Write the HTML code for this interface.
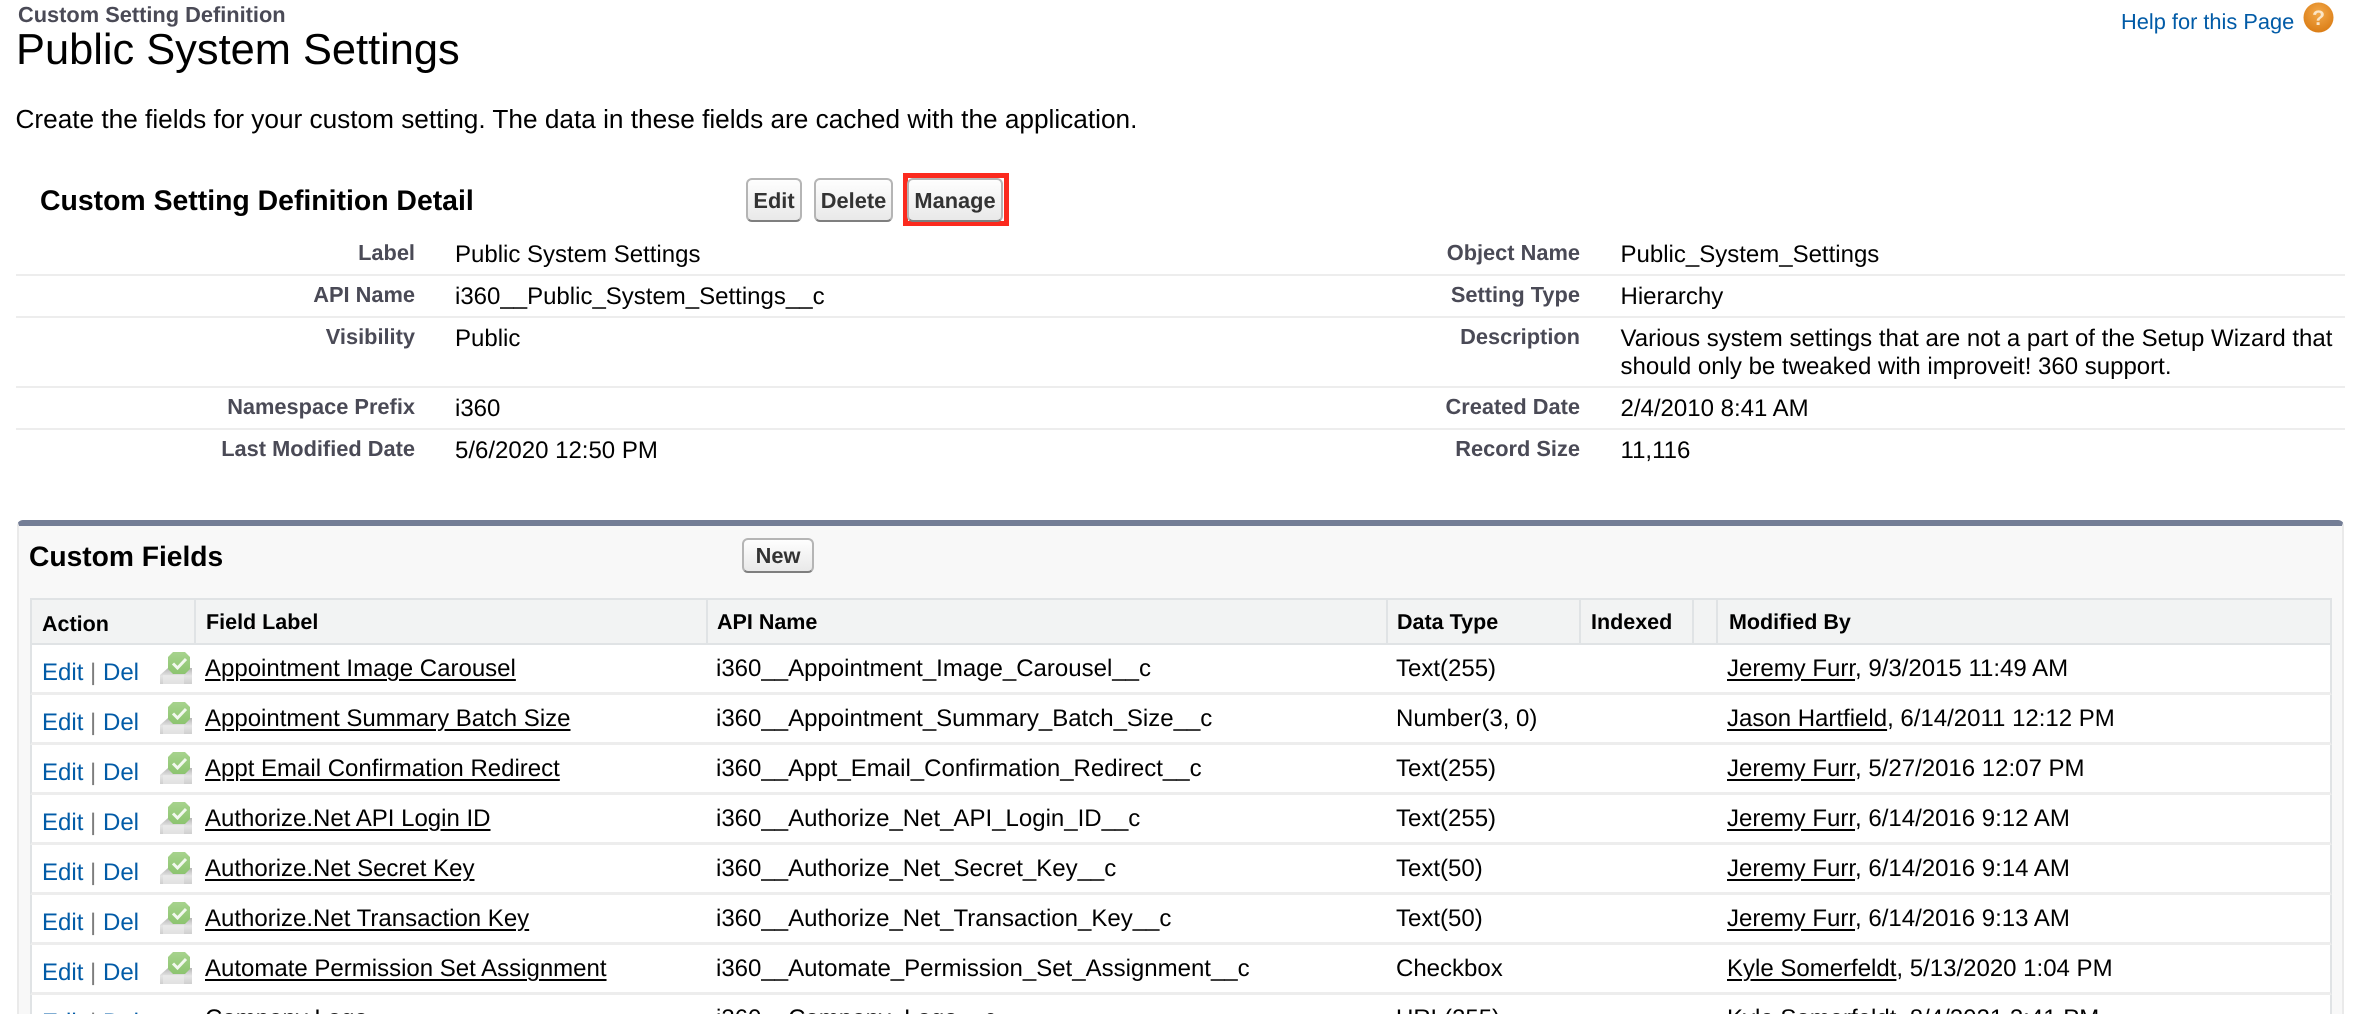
<!DOCTYPE html>
<html><head><meta charset="utf-8"><title>Public System Settings</title>
<style>
html,body{margin:0;padding:0;background:#fff;width:2362px;height:1014px;overflow:hidden}
#w{width:2362px;height:1014px;overflow:hidden;position:relative;font-family:"Liberation Sans",Arial,sans-serif;color:#000;text-rendering:geometricPrecision}
.t,.b{position:absolute;line-height:0;white-space:nowrap}
.t{font-size:24px}
.b{font-size:21.8px;font-weight:bold}
.l{color:#4a4a56;text-align:right}
a{color:inherit;text-decoration:none}
.u{text-decoration:underline;text-decoration-thickness:2px;text-underline-offset:3px}
.sep{position:absolute;left:16px;width:2329px;height:2px;background:#ededed}
.btn{position:absolute;box-sizing:border-box;border:2px solid #b5b5b5;border-bottom-color:#7f7f7f;border-radius:6px;background:linear-gradient(#fefefe,#e9e9e9);color:#333;font-weight:bold;font-size:21.8px;text-align:center}
.panel{position:absolute;left:17px;top:520px;width:2327px;height:500px;box-sizing:border-box;background:#f8f8f8;border-top:6px solid #747e96;border-left:2px solid #eaeaea;border-right:2px solid #eaeaea;border-radius:6px 6px 0 0}
.head{position:absolute;left:30px;top:598px;width:2302px;height:47px;box-sizing:border-box;background:#f2f3f3;border:2px solid #e0e3e5}
.col{position:absolute;top:600px;width:2px;height:43px;background:#e0e3e5}
.r{position:absolute;left:30px;width:2302px;height:50px;box-sizing:border-box;background:#fff;border-bottom:3px solid #ededed;border-left:2px solid #e0e3e5;border-right:2px solid #e0e3e5}
.r .t{top:24px}
.r .a{top:28px;color:#015ba7}
.r .p{color:#7d7d7d}
.r svg{position:absolute;left:128px;top:7px}
</style></head><body><div id="w">
<svg width="0" height="0" style="position:absolute"><defs>
<linearGradient id="g1" x1="0" y1="0" x2="0" y2="1"><stop offset="0" stop-color="#b5b5b5"/><stop offset=".5" stop-color="#e4e4e4"/><stop offset="1" stop-color="#cfcfcf"/></linearGradient>
<linearGradient id="g2" x1="0" y1="0" x2="0" y2="1"><stop offset="0" stop-color="#a7d38d"/><stop offset="1" stop-color="#8cc46f"/></linearGradient>
<g id="ic"><path d="M0 23L8 16H24V32H0Z" fill="url(#g1)"/><path d="M3 23H29V32H3Z" fill="#eeeeee" opacity=".55"/><path d="M24 16H32V32H24Z" fill="url(#g1)"/><path d="M13 0H25L30 5V17L25 22H13L8 17V5Z" fill="url(#g2)"/><path d="M13 11.5L17.5 16L26 7" fill="none" stroke="#f2f8ee" stroke-width="3"/></g>
</defs></svg>

<div class="b" style="left:18px;top:15px;color:#4a4a56">Custom Setting Definition</div>
<div class="t" style="left:16px;top:49.5px;font-size:43.4px">Public System Settings</div>
<div class="t" style="left:15.5px;top:119px;font-size:26.2px">Create the fields for your custom setting. The data in these fields are cached with the application.</div>
<div class="b" style="left:2121px;top:22px;font-weight:normal;color:#015ba7">Help for this Page</div>
<svg style="position:absolute;left:2303px;top:2px" width="31" height="31" viewBox="0 0 31 31"><defs><radialGradient id="o" cx=".5" cy=".35" r=".7"><stop offset="0" stop-color="#f3a94a"/><stop offset="1" stop-color="#d97a12"/></radialGradient></defs><circle cx="15.5" cy="15.5" r="15" fill="url(#o)"/><text x="15.5" y="23" font-family="Liberation Sans" font-weight="bold" font-size="21" text-anchor="middle" fill="#fbe6c8">?</text></svg>

<div class="b" style="left:40px;top:200.5px;font-size:28.4px">Custom Setting Definition Detail</div>
<div style="position:absolute;left:903px;top:173px;width:106px;height:53px;box-sizing:border-box;border:5px solid #fb2a1e"></div>
<div class="btn" style="left:746px;top:178px;width:56px;height:44px;line-height:41px">Edit</div>
<div class="btn" style="left:814px;top:178px;width:79px;height:44px;line-height:41px">Delete</div>
<div class="btn" style="left:907px;top:178px;width:96px;height:44px;line-height:41px">Manage</div>

<div class="b l" style="right:1947px;top:253px">Label</div><div class="t" style="left:455px;top:255px">Public System Settings</div>
<div class="b l" style="right:782px;top:253px">Object Name</div><div class="t" style="left:1620.5px;top:255px">Public_System_Settings</div>
<div class="sep" style="top:274px"></div>
<div class="b l" style="right:1947px;top:295px">API Name</div><div class="t" style="left:455px;top:297px">i360__Public_System_Settings__c</div>
<div class="b l" style="right:782px;top:295px">Setting Type</div><div class="t" style="left:1620.5px;top:297px">Hierarchy</div>
<div class="sep" style="top:316px"></div>
<div class="b l" style="right:1947px;top:337px">Visibility</div><div class="t" style="left:455px;top:339px">Public</div>
<div class="b l" style="right:782px;top:337px">Description</div><div class="t" style="left:1620.5px;top:339px">Various system settings that are not a part of the Setup Wizard that</div><div class="t" style="left:1620.5px;top:367px">should only be tweaked with improveit! 360 support.</div>
<div class="sep" style="top:386px"></div>
<div class="b l" style="right:1947px;top:407px">Namespace Prefix</div><div class="t" style="left:455px;top:409px">i360</div>
<div class="b l" style="right:782px;top:407px">Created Date</div><div class="t" style="left:1620.5px;top:409px">2/4/2010 8:41 AM</div>
<div class="sep" style="top:428px"></div>
<div class="b l" style="right:1947px;top:449px">Last Modified Date</div><div class="t" style="left:455px;top:451px">5/6/2020 12:50 PM</div>
<div class="b l" style="right:782px;top:449px">Record Size</div><div class="t" style="left:1620.5px;top:451px">11,116</div>

<div class="panel"></div>
<div class="b" style="left:29px;top:555.5px;font-size:28.2px">Custom Fields</div>
<div class="btn" style="left:742px;top:538px;width:72px;height:35px;line-height:32px">New</div>

<div class="head"></div>
<div class="col" style="left:194px"></div><div class="col" style="left:706px"></div><div class="col" style="left:1386px"></div><div class="col" style="left:1579px"></div><div class="col" style="left:1692px"></div><div class="col" style="left:1716px"></div>
<div class="b" style="left:42px;top:624px;font-size:21.5px">Action</div>
<div class="b" style="left:206px;top:622px;font-size:21.5px">Field Label</div>
<div class="b" style="left:717px;top:622px;font-size:21.5px">API Name</div>
<div class="b" style="left:1397px;top:622px;font-size:21.5px">Data Type</div>
<div class="b" style="left:1591px;top:622px;font-size:21.5px">Indexed</div>
<div class="b" style="left:1729px;top:622px;font-size:21.5px">Modified By</div>

<div class="r" style="top:645px"><div class="t a" style="left:10px">Edit</div><div class="t p" style="left:58px;top:28px">|</div><div class="t a" style="left:71px">Del</div><svg width="32" height="32"><use href="#ic"/></svg><div class="t u" style="left:173px">Appointment Image Carousel</div><div class="t" style="left:684px">i360__Appointment_Image_Carousel__c</div><div class="t" style="left:1364px">Text(255)</div><div class="t" style="left:1695px"><span class="u">Jeremy Furr</span>, 9/3/2015 11:49 AM</div></div>

<div class="r" style="top:695px"><div class="t a" style="left:10px">Edit</div><div class="t p" style="left:58px;top:28px">|</div><div class="t a" style="left:71px">Del</div><svg width="32" height="32"><use href="#ic"/></svg><div class="t u" style="left:173px">Appointment Summary Batch Size</div><div class="t" style="left:684px">i360__Appointment_Summary_Batch_Size__c</div><div class="t" style="left:1364px">Number(3, 0)</div><div class="t" style="left:1695px"><span class="u">Jason Hartfield</span>, 6/14/2011 12:12 PM</div></div>

<div class="r" style="top:745px"><div class="t a" style="left:10px">Edit</div><div class="t p" style="left:58px;top:28px">|</div><div class="t a" style="left:71px">Del</div><svg width="32" height="32"><use href="#ic"/></svg><div class="t u" style="left:173px">Appt Email Confirmation Redirect</div><div class="t" style="left:684px">i360__Appt_Email_Confirmation_Redirect__c</div><div class="t" style="left:1364px">Text(255)</div><div class="t" style="left:1695px"><span class="u">Jeremy Furr</span>, 5/27/2016 12:07 PM</div></div>

<div class="r" style="top:795px"><div class="t a" style="left:10px">Edit</div><div class="t p" style="left:58px;top:28px">|</div><div class="t a" style="left:71px">Del</div><svg width="32" height="32"><use href="#ic"/></svg><div class="t u" style="left:173px">Authorize.Net API Login ID</div><div class="t" style="left:684px">i360__Authorize_Net_API_Login_ID__c</div><div class="t" style="left:1364px">Text(255)</div><div class="t" style="left:1695px"><span class="u">Jeremy Furr</span>, 6/14/2016 9:12 AM</div></div>

<div class="r" style="top:845px"><div class="t a" style="left:10px">Edit</div><div class="t p" style="left:58px;top:28px">|</div><div class="t a" style="left:71px">Del</div><svg width="32" height="32"><use href="#ic"/></svg><div class="t u" style="left:173px">Authorize.Net Secret Key</div><div class="t" style="left:684px">i360__Authorize_Net_Secret_Key__c</div><div class="t" style="left:1364px">Text(50)</div><div class="t" style="left:1695px"><span class="u">Jeremy Furr</span>, 6/14/2016 9:14 AM</div></div>

<div class="r" style="top:895px"><div class="t a" style="left:10px">Edit</div><div class="t p" style="left:58px;top:28px">|</div><div class="t a" style="left:71px">Del</div><svg width="32" height="32"><use href="#ic"/></svg><div class="t u" style="left:173px">Authorize.Net Transaction Key</div><div class="t" style="left:684px">i360__Authorize_Net_Transaction_Key__c</div><div class="t" style="left:1364px">Text(50)</div><div class="t" style="left:1695px"><span class="u">Jeremy Furr</span>, 6/14/2016 9:13 AM</div></div>

<div class="r" style="top:945px"><div class="t a" style="left:10px">Edit</div><div class="t p" style="left:58px;top:28px">|</div><div class="t a" style="left:71px">Del</div><svg width="32" height="32"><use href="#ic"/></svg><div class="t u" style="left:173px">Automate Permission Set Assignment</div><div class="t" style="left:684px">i360__Automate_Permission_Set_Assignment__c</div><div class="t" style="left:1364px">Checkbox</div><div class="t" style="left:1695px"><span class="u">Kyle Somerfeldt</span>, 5/13/2020 1:04 PM</div></div>

<div class="r" style="top:995px"><div class="t a" style="left:10px">Edit</div><div class="t p" style="left:58px;top:28px">|</div><div class="t a" style="left:71px">Del</div><div class="t u" style="left:173px">Company Logo</div><div class="t" style="left:684px">i360__Company_Logo__c</div><div class="t" style="left:1364px">URL(255)</div><div class="t" style="left:1695px"><span class="u">Kyle Somerfeldt</span>, 8/4/2021 3:41 PM</div></div>
</div></body></html>
